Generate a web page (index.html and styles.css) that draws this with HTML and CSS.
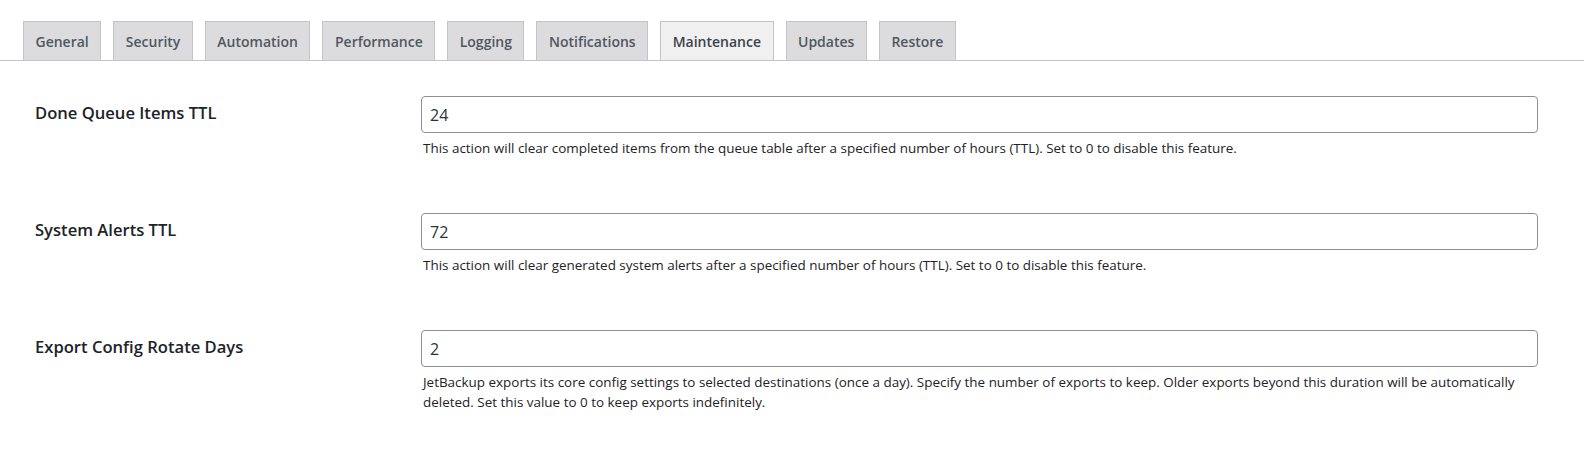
FILE: index.html
```html
<!DOCTYPE html>
<html lang="en">
<head>
<meta charset="utf-8">
<title>Settings – Maintenance</title>
<link rel="stylesheet" href="styles.css">
</head>
<body>
<nav class="tabs">
  <a class="tab" href="#">General</a>
  <a class="tab" href="#">Security</a>
  <a class="tab" href="#">Automation</a>
  <a class="tab" href="#">Performance</a>
  <a class="tab" href="#">Logging</a>
  <a class="tab" href="#">Notifications</a>
  <a class="tab tab-active" href="#">Maintenance</a>
  <a class="tab" href="#">Updates</a>
  <a class="tab" href="#">Restore</a>
</nav>
<form class="settings">
  <div class="row">
    <label class="label" for="f1">Done Queue Items TTL</label>
    <div class="field">
      <input class="input" id="f1" type="text" value="24">
      <p class="desc">This action will clear completed items from the queue table after a specified number of hours (TTL). Set to 0 to disable this feature.</p>
    </div>
  </div>
  <div class="row">
    <label class="label" for="f2">System Alerts TTL</label>
    <div class="field">
      <input class="input" id="f2" type="text" value="72">
      <p class="desc">This action will clear generated system alerts after a specified number of hours (TTL). Set to 0 to disable this feature.</p>
    </div>
  </div>
  <div class="row">
    <label class="label" for="f3">Export Config Rotate Days</label>
    <div class="field">
      <input class="input" id="f3" type="text" value="2">
      <p class="desc">JetBackup exports its core config settings to selected destinations (once a day). Specify the number of exports to keep. Older exports beyond this duration will be automatically deleted. Set this value to 0 to keep exports indefinitely.</p>
    </div>
  </div>
</form>
</body>
</html>
```
FILE: styles.css
```css
* { box-sizing: border-box; }
html, body { margin: 0; padding: 0; background: #ffffff; }
body {
  font-family: "Open Sans", "Noto Sans", sans-serif;
  color: #1d2327;
}
.tabs {
  display: flex;
  gap: 12px;
  padding: 21px 0 0 23px;
  border-bottom: 1px solid #c3c4c7;
}
.tab {
  display: block;
  height: 40px;
  margin-bottom: -1px;
  padding: 2px 11.5px 0;
  line-height: 36px;
  font-size: 14px;
  font-weight: 600;
  color: #50575e;
  text-decoration: none;
  background: #dcdcde;
  border: 1px solid #c3c4c7;
  white-space: nowrap;
}
.tab-active {
  background: #f0f0f1;
  color: #3c434a;
}
.settings {
  padding: 15px 46px 0 35px;
}
.row {
  display: flex;
  padding: 20px 0 35px;
}
.label {
  flex: 0 0 386px;
  padding-top: 6px;
  font-size: 16.6px;
  line-height: 22px;
  font-weight: 600;
  color: #1d2327;
}
.field {
  flex: 1;
  min-width: 0;
}
.input {
  display: block;
  width: 100%;
  height: 37px;
  margin: 0;
  padding: 0 8px;
  border: 1px solid #8c8f94;
  border-radius: 4px;
  background: #fff;
  font-family: inherit;
  font-size: 16px;
  color: #2c3338;
}
.desc {
  margin: 5px 0 0;
  padding-left: 2px;
  font-size: 13.45px;
  line-height: 20px;
  color: #1d2327;
}
```
